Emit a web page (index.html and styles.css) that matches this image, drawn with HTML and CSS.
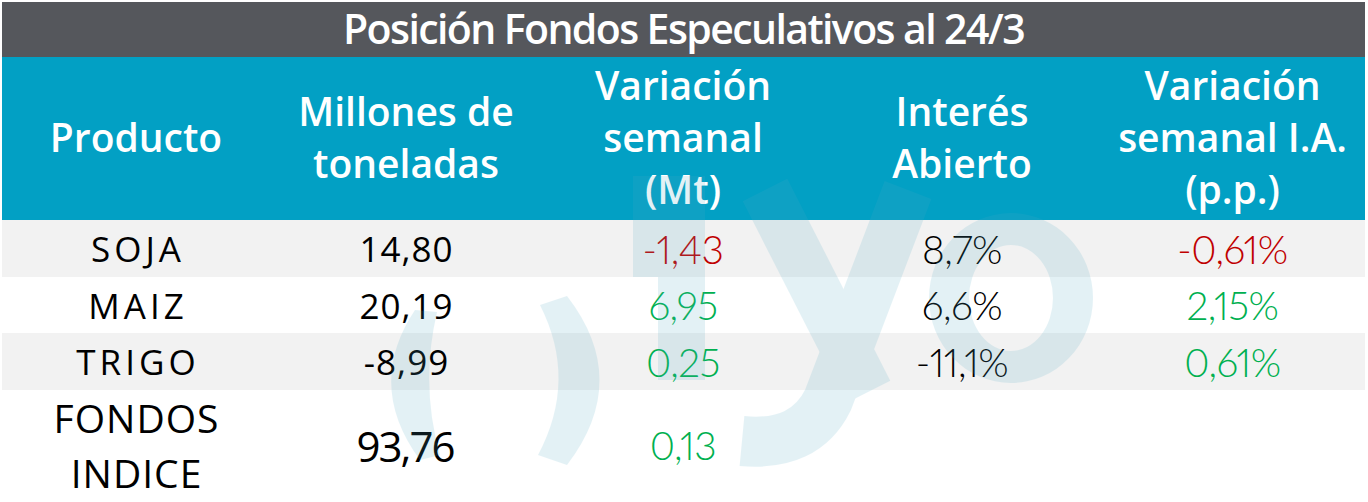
FILE: index.html
```html
<!DOCTYPE html>
<html lang="es">
<head>
<meta charset="utf-8">
<title>Posición Fondos Especulativos</title>
<link rel="stylesheet" href="styles.css">
</head>
<body>
<div class="page">
  <div class="table">
    <div class="title">Posición Fondos Especulativos al 24/3</div>
    <div class="row head">
      <div class="cell">Producto</div>
      <div class="cell">Millones de<br>toneladas</div>
      <div class="cell">Variación<br>semanal<br>(Mt)</div>
      <div class="cell">Interés<br>Abierto</div>
      <div class="cell">Variación<br>semanal I.A.<br>(p.p.)</div>
    </div>
    <div class="row body shade r1">
      <div class="cell prod">SOJA</div>
      <div class="cell mt">14,80</div>
      <div class="cell num red">-1,43</div>
      <div class="cell num">8,7%</div>
      <div class="cell num red">-0,61%</div>
    </div>
    <div class="row body r2">
      <div class="cell prod">MAIZ</div>
      <div class="cell mt">20,19</div>
      <div class="cell num green">6,95</div>
      <div class="cell num">6,6%</div>
      <div class="cell num green">2,15%</div>
    </div>
    <div class="row body shade r3">
      <div class="cell prod">TRIGO</div>
      <div class="cell mt">-8,99</div>
      <div class="cell num green">0,25</div>
      <div class="cell num">-11,1%</div>
      <div class="cell num green">0,61%</div>
    </div>
    <div class="row body big r4">
      <div class="cell prod">FONDOS<br>INDICE</div>
      <div class="cell mt">93,76</div>
      <div class="cell num green">0,13</div>
      <div class="cell num"></div>
      <div class="cell num"></div>
    </div>
  </div>
  <svg class="watermark" width="1368" height="502" viewBox="0 0 1368 502" aria-hidden="true">
    <g fill="rgb(80,171,197)">
      <path d="M415 310 Q365 385 420 460 L440 455 Q420 385 437 312 Z"/>
      <path d="M567 296 Q632 380 567 465 L538 455 Q578 380 540 305 Z"/>
      <path d="M633 176 H705 V380 H658 V277 H633 Z"/>
      <path fill-rule="evenodd" d="M929 298 A82 85 0 1 0 1093 298 A82 85 0 1 0 929 298 Z M969 298 A42 53 0 1 1 1053 298 A42 53 0 1 1 969 298 Z"/>
    </g>
    <g fill="none" stroke="rgb(80,171,197)" stroke-width="50">
      <path d="M765 190 L868 392"/>
      <path d="M908 190 L828 400 Q805 447 742 441"/>
    </g>
  </svg>
</div>
</body>
</html>
```

FILE: styles.css
```css
html, body {
  margin: 0;
  padding: 0;
  background: #ffffff;
}

.page {
  position: relative;
  width: 1368px;
  height: 502px;
  overflow: hidden;
}

.table {
  margin: 2px 0 0 2px;
  width: 1363px;
  display: flex;
  flex-direction: column;
}

.title {
  height: 55px;
  box-sizing: border-box;
  padding-bottom: 3px;
  line-height: 52px;
  background: #55575c;
  color: #ffffff;
  text-align: center;
  font-family: "Open Sans", "Noto Sans", sans-serif;
  font-weight: 600;
  font-size: 41px;
  letter-spacing: -1.6px;
  white-space: nowrap;
}

.row {
  display: grid;
  grid-template-columns: 268px 272px 282px 276px 265px;
}

.cell {
  display: flex;
  align-items: center;
  justify-content: center;
  text-align: center;
  white-space: nowrap;
}

.head {
  height: 163px;
  background: #02a0c4;
  color: #ffffff;
  font-family: "Open Sans", "Noto Sans", sans-serif;
  font-weight: 600;
  font-size: 39px;
  line-height: 52px;
}

.head .cell {
  padding-bottom: 3px;
}

.body {
  background: #ffffff;
  color: #000000;
}

.shade {
  background: #f2f2f2;
}

.r1 { height: 57px; }
.r2 { height: 56px; }
.r3 { height: 57px; }
.r4 { height: 107px; }

.prod {
  font-family: "Open Sans", "Noto Sans", sans-serif;
  font-size: 35px;
  letter-spacing: 4px;
  padding-left: 4px;
}

.mt {
  font-family: "Open Sans", "Noto Sans", sans-serif;
  font-size: 35px;
  letter-spacing: 1px;
  padding-left: 1px;
}

.num {
  font-family: Lato, "Open Sans", sans-serif;
  font-weight: 300;
  font-size: 39px;
  letter-spacing: -0.5px;
  font-variant-numeric: proportional-nums;
}

.big .prod {
  font-size: 39px;
  line-height: 55px;
  letter-spacing: 1px;
  padding-left: 1px;
}

.big .mt {
  font-size: 42px;
  letter-spacing: -2px;
  padding-left: 0;
  padding-right: 2px;
}

.red { color: #c00000; }
.green { color: #00b050; }

.watermark {
  position: absolute;
  left: 0;
  top: 0;
  opacity: 0.154;
  pointer-events: none;
}
```
